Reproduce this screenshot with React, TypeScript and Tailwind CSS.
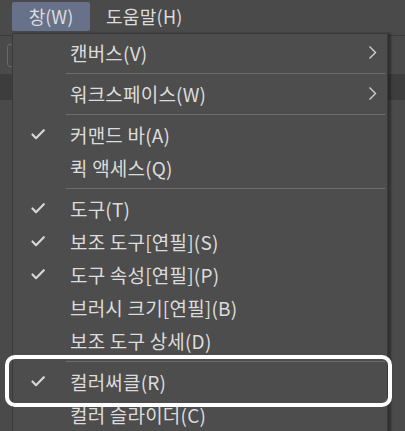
import React from 'react';

type Item =
  | { kind: 'sep' }
  | { kind: 'item'; label: string; checked?: boolean; submenu?: boolean };

const items: Item[] = [
  { kind: 'item', label: '캔버스(V)', submenu: true },
  { kind: 'sep' },
  { kind: 'item', label: '워크스페이스(W)', submenu: true },
  { kind: 'sep' },
  { kind: 'item', label: '커맨드 바(A)', checked: true },
  { kind: 'item', label: '퀵 액세스(Q)' },
  { kind: 'sep' },
  { kind: 'item', label: '도구(T)', checked: true },
  { kind: 'item', label: '보조 도구[연필](S)', checked: true },
  { kind: 'item', label: '도구 속성[연필](P)', checked: true },
  { kind: 'item', label: '브러시 크기[연필](B)' },
  { kind: 'item', label: '보조 도구 상세(D)' },
  { kind: 'sep' },
  { kind: 'item', label: '컬러써클(R)', checked: true },
  { kind: 'item', label: '컬러 슬라이더(C)' },
];

function Check() {
  return (
    <svg width="14" height="11" viewBox="0 0 14 11" fill="none">
      <path d="M1.5 5.5 L5 9.2 L12.8 1.2" stroke="#d6d6d6" strokeWidth="2.2" strokeLinecap="round" strokeLinejoin="round" />
    </svg>
  );
}

function Chevron() {
  return (
    <svg width="9" height="15" viewBox="0 0 9 15" fill="none">
      <path d="M1.5 1.5 L7.5 7.5 L1.5 13.5" stroke="#d0d0d0" strokeWidth="1.4" />
    </svg>
  );
}

export default function App() {
  return (
    <div
      className="relative w-[405px] h-[431px] overflow-hidden bg-[#4a4a4a] text-[#dcdcdc]"
      style={{ fontFamily: '"Noto Sans CJK KR", "Noto Sans", sans-serif' }}
    >
      {/* menu bar */}
      <div className="flex h-[33px] items-center bg-[#4a4a4a] pl-[12px] text-[18px]">
        <div className="flex h-[29px] w-[78px] items-center justify-center rounded-[2px] bg-[#67718a]">창(W)</div>
        <div className="ml-[16px] tracking-[0.3px]">도움말(H)</div>
      </div>

      {/* background panels */}
      <div className="h-[3px] border-b border-[#3c3c3c]" />
      <div className="relative h-[38px]">
        <div className="absolute left-[7px] top-[8px] h-[23px] w-[8px] rounded-[3px] border border-[#6a6a6a]" />
      </div>
      <div className="h-[26px] bg-[#3d3d3d]" />

      {/* dropdown */}
      <div className="absolute left-[12px] top-[33px] w-[376px] border border-[#393939] bg-[#4d4d4d] pt-[2px] shadow-[3px_0_2px_rgba(0,0,0,0.35)]">
        {items.map((it, i) =>
          it.kind === 'sep' ? (
            <div key={i} className="flex h-[8px] items-center">
              <div className="ml-[53px] mr-[2px] h-px flex-1 bg-[#6e6e6e]" />
            </div>
          ) : (
            <div key={i} className="flex h-[33px] items-center text-[19px]">
              <div className="flex w-[57px] justify-center pr-[8px]">{it.checked ? <Check /> : null}</div>
              <div className="flex-1 leading-none tracking-[0.2px]">{it.label}</div>
              <div className="mr-[10px] flex w-[9px]">{it.submenu ? <Chevron /> : null}</div>
            </div>
          )
        )}
      </div>

      {/* highlight box */}
      <div className="absolute left-[5px] top-[355px] h-[52px] w-[387px] rounded-[10px] border-[4px] border-white" />
    </div>
  );
}
